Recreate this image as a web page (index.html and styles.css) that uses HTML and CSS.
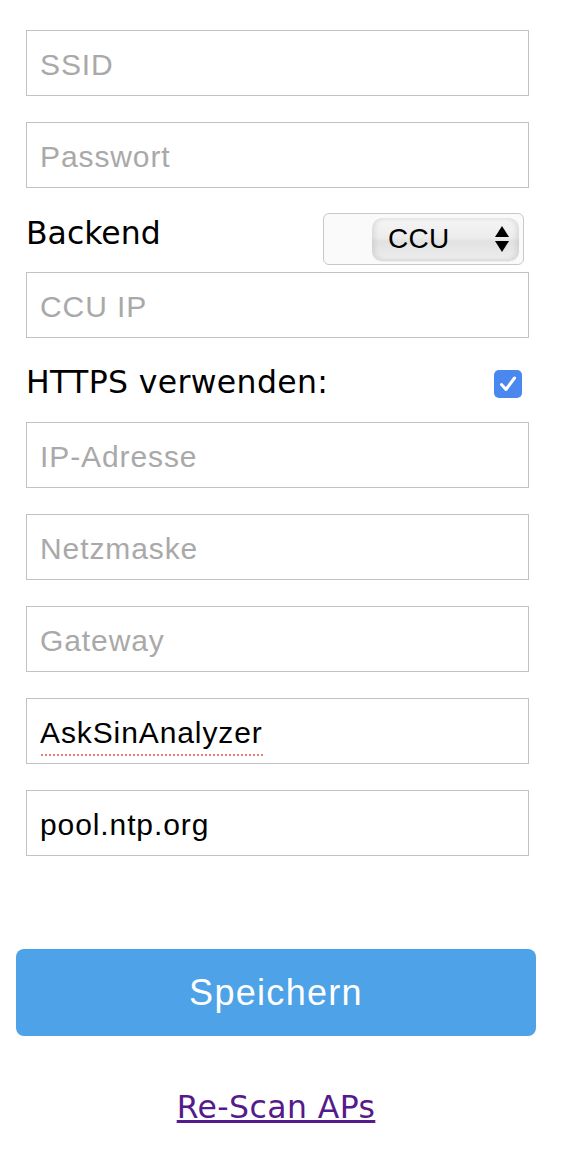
FILE: index.html
```html
<!DOCTYPE html>
<html lang="de">
<head>
<meta charset="utf-8">
<title>AskSinAnalyzer Konfiguration</title>
<link rel="stylesheet" href="styles.css">
</head>
<body>
<form class="form">
  <input class="field" type="text" placeholder="SSID">
  <input class="field" type="text" placeholder="Passwort">
  <div class="row row-backend">
    <label class="label">Backend</label>
    <div class="select">
      <div class="pill">
        <span class="pill-text">CCU</span>
        <svg class="arrows" width="14" height="26" viewBox="0 0 14 26">
          <polygon points="7,0 14,11 0,11" fill="#000"/>
          <polygon points="0,15 14,15 7,26" fill="#000"/>
        </svg>
      </div>
    </div>
  </div>
  <input class="field" type="text" placeholder="CCU IP">
  <div class="row row-https">
    <label class="label label-https">HTTPS verwenden:</label>
    <span class="check">
      <svg width="28" height="28" viewBox="0 0 28 28">
        <path d="M7.5 14.5 L12 19.5 L20.5 8" fill="none" stroke="#fff" stroke-width="3" stroke-linecap="round" stroke-linejoin="round"/>
      </svg>
    </span>
  </div>
  <input class="field" type="text" placeholder="IP-Adresse">
  <input class="field" type="text" placeholder="Netzmaske">
  <input class="field" type="text" placeholder="Gateway">
  <input class="field field-spell" type="text" value="AskSinAnalyzer">
  <input class="field" type="text" value="pool.ntp.org">
  <button class="save" type="button">Speichern</button>
  <div class="link-wrap"><a class="rescan" href="#">Re-Scan APs</a></div>
</form>
</body>
</html>
```

FILE: styles.css
```css
html, body {
  margin: 0;
  padding: 0;
  background: #fff;
}

.form {
  display: flex;
  flex-direction: column;
  align-items: flex-start;
  width: 520px;
  padding: 30px 0 0 16px;
}

.field {
  display: block;
  box-sizing: border-box;
  width: 503px;
  height: 66px;
  margin: 0 0 26px 10px;
  padding: 4px 13px 0;
  border: 1px solid #c2c2c2;
  border-radius: 0;
  background: #fff;
  color: #000;
  font-family: "Liberation Sans", Arial, sans-serif;
  font-size: 30px;
  letter-spacing: 0.9px;
  outline: none;
}

.field::placeholder {
  color: #a9a9a9;
  opacity: 1;
}

.field-spell {
  background-image: repeating-linear-gradient(to right, #f07a7a 0 2px, transparent 2px 4px);
  background-repeat: no-repeat;
  background-size: 223px 2px;
  background-position: 14px 55px;
}

.row {
  display: flex;
  justify-content: space-between;
  align-items: flex-start;
  box-sizing: border-box;
  width: 498px;
  margin-left: 10px;
}

.row-backend {
  height: 52px;
  margin-top: -1px;
  margin-bottom: 7px;
}

.row-https {
  height: 58px;
}

.label {
  font-family: "DejaVu Sans", Verdana, sans-serif;
  font-size: 31.5px;
  line-height: 36px;
  color: #000;
}

.label-https {
  letter-spacing: 0.35px;
}

.row-backend .label {
  margin-top: 2px;
}

.select {
  box-sizing: border-box;
  width: 201px;
  height: 52px;
  border: 1px solid #c8c8c8;
  border-radius: 6px;
  background: #fafafa;
  display: flex;
  align-items: center;
  justify-content: flex-end;
  padding-right: 4px;
}

.pill {
  box-sizing: border-box;
  width: 147px;
  height: 43px;
  border-radius: 10px;
  background: linear-gradient(to bottom, #f6f6f6 0%, #ececec 45%, #e2e2e2 55%, #ededed 100%);
  box-shadow: inset 3px 0 5px rgba(0, 0, 0, 0.08), inset -3px 0 5px rgba(0, 0, 0, 0.08), 0 1px 1px rgba(0, 0, 0, 0.06);
  display: flex;
  align-items: center;
  justify-content: space-between;
  padding: 0 10px 0 16px;
}

.pill-text {
  font-family: "Liberation Sans", Arial, sans-serif;
  font-size: 28px;
  color: #000;
  letter-spacing: 0.3px;
}

.arrows {
  display: block;
}

.check {
  display: flex;
  align-items: center;
  justify-content: center;
  width: 28px;
  height: 28px;
  margin-top: 6px;
  margin-right: 2px;
  border-radius: 5px;
  background: #4a87ee;
}

.check svg {
  display: block;
}

.save {
  display: block;
  box-sizing: border-box;
  width: 520px;
  height: 87px;
  margin-top: 67px;
  border: 0;
  border-radius: 8px;
  background: #4ea2e8;
  color: #fff;
  font-family: "Liberation Sans", Arial, sans-serif;
  font-size: 36px;
  letter-spacing: 1.3px;
  padding: 0;
}

.link-wrap {
  align-self: stretch;
  text-align: center;
  margin-top: 53px;
  font-family: "DejaVu Sans", Verdana, sans-serif;
  font-size: 31.5px;
  line-height: 36px;
}

.rescan {
  color: #551a8b;
  text-decoration: underline;
  letter-spacing: 0.4px;
}
```
